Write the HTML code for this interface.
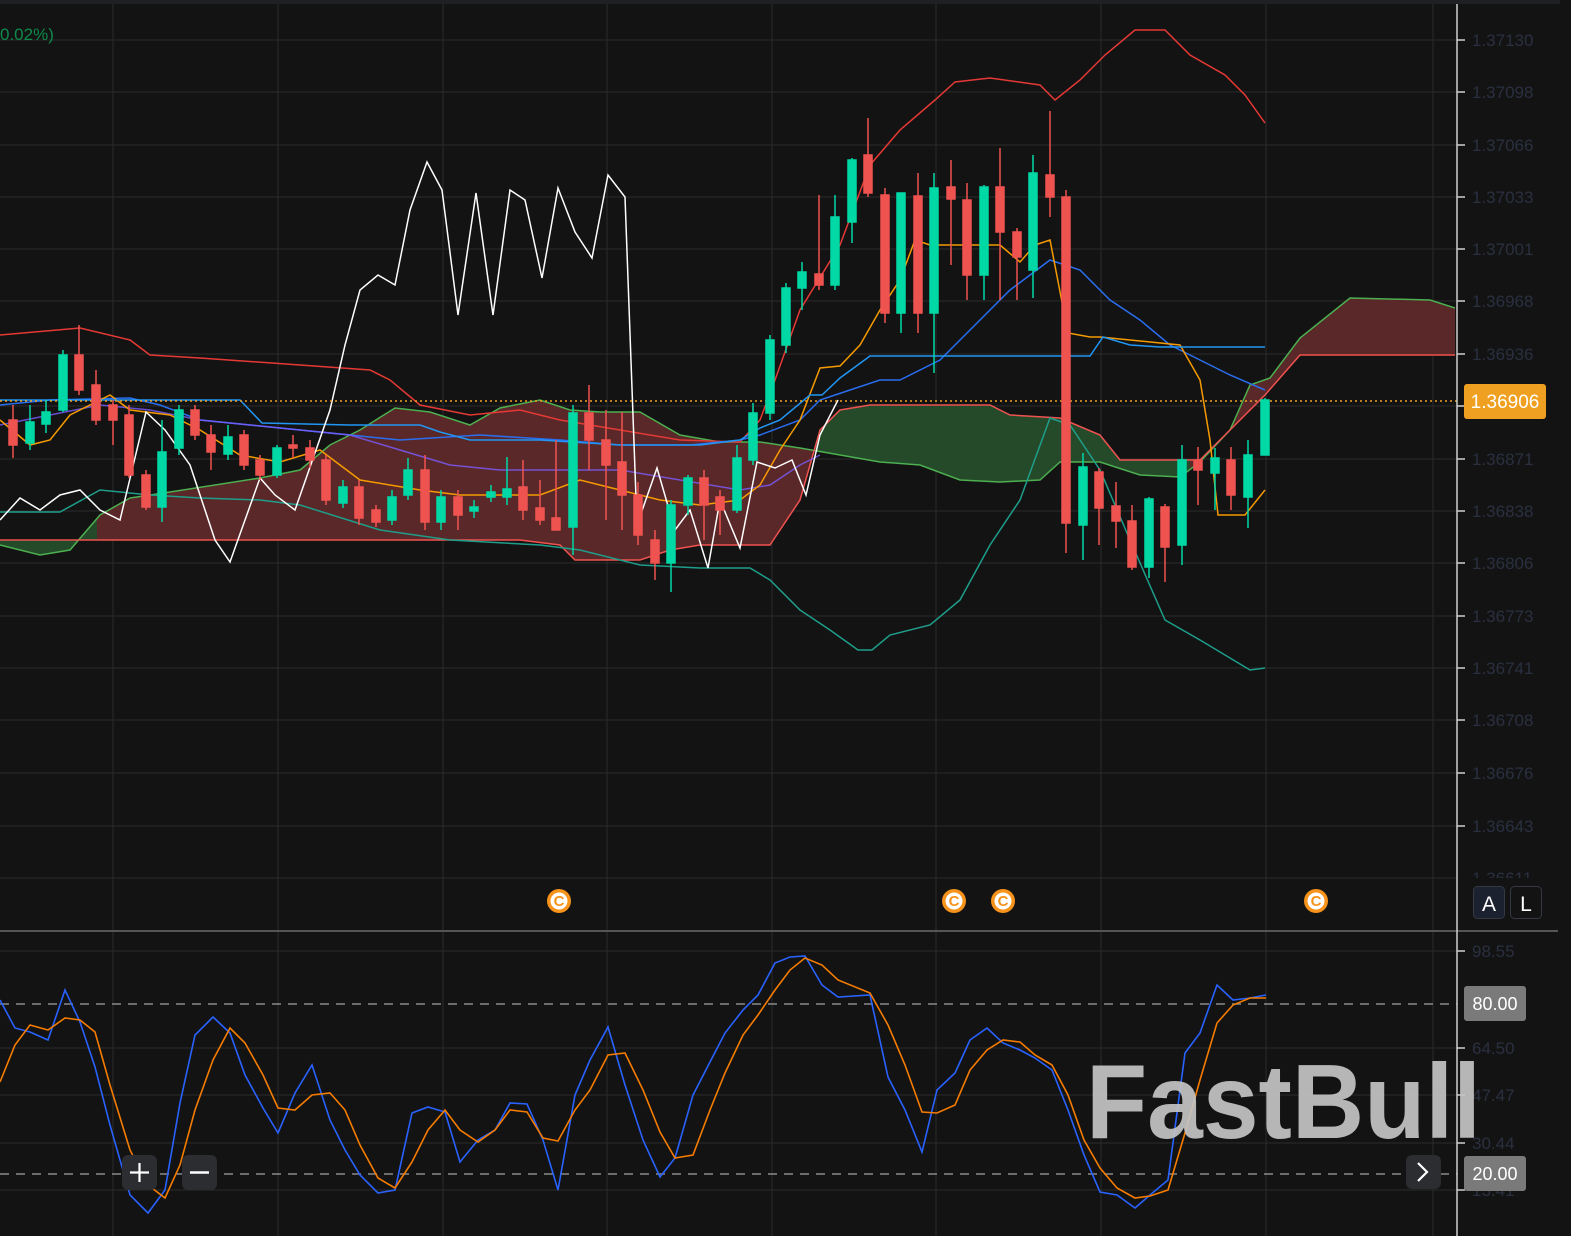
<!DOCTYPE html>
<html><head><meta charset="utf-8"><style>
html,body{margin:0;padding:0;background:#131313;}
svg{display:block}
text{font-family:"Liberation Sans",sans-serif}
</style></head><body>
<svg width="1571" height="1236" viewBox="0 0 1571 1236" xmlns="http://www.w3.org/2000/svg">
<defs>
<clipPath id="c1"><rect x="0" y="0" width="97" height="930"/></clipPath>
<clipPath id="c2"><rect x="97" y="0" width="718" height="930"/></clipPath>
<clipPath id="c3"><rect x="815" y="0" width="375" height="930"/></clipPath>
<clipPath id="c4"><rect x="1190" y="0" width="267" height="930"/></clipPath>
<clipPath id="main"><rect x="0" y="0" width="1457" height="930"/></clipPath>
<path id="cl" d="M0,545 L40,555 L70,550 L100,515 L130,498 L170,492 L260,478 L300,470 L330,445 L360,430 L395,408 L430,412 L470,425 L500,408 L540,400 L570,410 L600,412 L640,412 L680,435 L720,442 L760,442 L800,448 L840,455 L880,462 L920,465 L960,480 L1000,482 L1040,480 L1060,462 L1100,462 L1140,475 L1180,477 L1200,462 L1230,430 L1250,385 L1270,378 L1300,338 L1350,298 L1430,300 L1455,308 L1455,355 L1300,355 L1265,395 L1240,420 L1220,440 L1200,460 L1120,460 L1100,435 L1060,418 L1010,415 L990,405 L870,405 L840,410 L820,430 L800,500 L770,545 L700,545 L670,550 L640,560 L575,560 L560,545 L520,540 L400,540 L0,540 Z"/>
</defs>
<rect width="1571" height="1236" fill="#131313"/>
<rect width="1560" height="4" fill="#1f2024"/>
<g stroke="#2b2b2b" stroke-width="1">
<line x1="113" y1="4" x2="113" y2="1236"/><line x1="278" y1="4" x2="278" y2="1236"/><line x1="443" y1="4" x2="443" y2="1236"/><line x1="607" y1="4" x2="607" y2="1236"/><line x1="772" y1="4" x2="772" y2="1236"/><line x1="936" y1="4" x2="936" y2="1236"/><line x1="1101" y1="4" x2="1101" y2="1236"/><line x1="1266" y1="4" x2="1266" y2="1236"/><line x1="1433" y1="4" x2="1433" y2="1236"/>
<line x1="0" y1="40" x2="1457" y2="40"/><line x1="0" y1="92" x2="1457" y2="92"/><line x1="0" y1="145" x2="1457" y2="145"/><line x1="0" y1="197" x2="1457" y2="197"/><line x1="0" y1="249" x2="1457" y2="249"/><line x1="0" y1="301" x2="1457" y2="301"/><line x1="0" y1="354" x2="1457" y2="354"/><line x1="0" y1="406" x2="1457" y2="406"/><line x1="0" y1="459" x2="1457" y2="459"/><line x1="0" y1="511" x2="1457" y2="511"/><line x1="0" y1="563" x2="1457" y2="563"/><line x1="0" y1="616" x2="1457" y2="616"/><line x1="0" y1="668" x2="1457" y2="668"/><line x1="0" y1="720" x2="1457" y2="720"/><line x1="0" y1="773" x2="1457" y2="773"/><line x1="0" y1="826" x2="1457" y2="826"/><line x1="0" y1="878" x2="1457" y2="878"/>
<line x1="0" y1="951" x2="1457" y2="951"/><line x1="0" y1="1048" x2="1457" y2="1048"/><line x1="0" y1="1095" x2="1457" y2="1095"/><line x1="0" y1="1143" x2="1457" y2="1143"/><line x1="0" y1="1190" x2="1457" y2="1190"/>
</g>
<text x="0" y="40" font-size="17" fill="#0e8a4a">0.02%)</text>
<use href="#cl" fill="#254a2a" clip-path="url(#c1)"/>
<use href="#cl" fill="#5a2828" clip-path="url(#c2)"/>
<use href="#cl" fill="#254a2a" clip-path="url(#c3)"/>
<use href="#cl" fill="#5a2828" clip-path="url(#c4)"/>
<g fill="none" stroke-width="1.5" clip-path="url(#main)">
<polyline stroke="#4caf50" points="0,545 40,555 70,550 100,515 130,498 170,492 260,478 300,470 330,445 360,430 395,408 430,412 470,425 500,408 540,400 570,410 600,412 640,412 680,435 720,442 760,442 800,448 840,455 880,462 920,465 960,480 1000,482 1040,480 1060,462 1100,462 1140,475 1180,477 1200,462 1230,430 1250,385 1270,378 1300,338 1350,298 1430,300 1455,308"/>
<polyline stroke="#ef5350" points="0,540 400,540 520,540 560,545 575,560 640,560 670,550 700,545 770,545 800,500 820,430 840,410 870,405 990,405 1010,415 1060,418 1100,435 1120,460 1200,460 1220,440 1240,420 1265,395 1300,355 1455,355"/>
<polyline stroke="#e53935" points="0,335 80,328 130,340 150,355 200,358 300,365 370,370 390,380 420,405 470,415 520,410 560,420 620,430 680,440 740,442 760,420 775,380 800,310 840,245 870,165 900,130 935,100 955,82 990,78 1040,85 1055,100 1080,80 1105,55 1135,30 1165,30 1190,55 1225,75 1245,95 1265,123"/>
<polyline stroke="#2a6ef0" points="0,405 50,400 130,398 160,405 200,420 250,425 300,430 350,435 400,440 480,435 560,440 620,445 690,445 740,440 760,435 800,420 820,400 850,390 880,380 900,380 940,360 980,320 1010,290 1050,260 1080,270 1110,300 1140,320 1170,345 1200,360 1230,375 1265,390"/>
<polyline stroke="#1e9e8a" points="0,512 60,512 100,490 150,495 200,498 260,500 300,505 380,530 450,540 540,545 580,550 640,565 700,568 750,568 770,580 800,610 830,630 858,650 872,650 890,635 930,625 960,600 990,545 1020,500 1050,418 1070,425 1100,470 1130,540 1165,620 1200,640 1250,670 1265,668"/>
<polyline stroke="#7c5cff" stroke-opacity="0.8" points="0,425 50,415 100,405 150,410 200,420 250,425 300,430 350,435 400,450 450,465 500,470 560,470 620,470 680,480 740,490 770,485 800,465 820,455"/>
<polyline stroke="#f59a00" points="0,420 30,445 50,440 70,415 110,395 130,410 170,415 200,430 240,455 280,462 320,450 360,480 420,490 460,495 540,495 580,480 620,490 660,500 700,505 740,500 760,485 780,450 800,420 820,368 840,366 860,345 880,310 900,280 915,240 930,245 970,245 1000,245 1020,262 1035,245 1050,240 1068,333 1090,337 1100,337 1180,345 1200,380 1210,440 1218,515 1245,515 1265,490"/>
<polyline stroke="#2196f3" points="0,400 240,400 262,423 350,425 420,425 440,432 470,440 540,440 620,445 700,445 740,440 760,428 780,420 810,395 822,395 840,378 870,356 1090,356 1103,337 1130,345 1160,347 1265,347"/>
<polyline stroke="#ffffff" points="0,520 20,498 40,510 60,495 80,490 100,510 120,520 146,412 165,430 190,465 215,540 230,562 260,478 275,495 295,510 330,410 345,345 360,290 378,275 395,285 410,210 427,162 442,190 458,315 476,193 493,315 510,190 525,200 542,278 558,188 575,232 592,258 608,175 625,197 637,525 657,468 675,530 690,510 708,568 720,500 740,548 757,462 775,468 792,460 806,495 820,435 838,400"/>
</g>
<line x1="0" y1="401" x2="1457" y2="401" stroke="#f0a020" stroke-width="1.5" stroke-dasharray="2 3"/>
<g stroke-width="1.5">
<g stroke="#ef5350" fill="#ef5350">
<line x1="13" y1="405" x2="13" y2="458"/><rect x="9" y="420" width="8" height="25"/>
<line x1="79" y1="325" x2="79" y2="395"/><rect x="75" y="355" width="8" height="35"/>
<line x1="96" y1="370" x2="96" y2="425"/><rect x="92" y="385" width="8" height="35"/>
<line x1="113" y1="400" x2="113" y2="445"/><rect x="109" y="405" width="8" height="15"/>
<line x1="129" y1="405" x2="129" y2="478"/><rect x="125" y="415" width="8" height="60"/>
<line x1="146" y1="470" x2="146" y2="510"/><rect x="142" y="475" width="8" height="32"/>
<line x1="195" y1="405" x2="195" y2="440"/><rect x="191" y="410" width="8" height="25"/>
<line x1="211" y1="425" x2="211" y2="470"/><rect x="207" y="435" width="8" height="17"/>
<line x1="244" y1="430" x2="244" y2="470"/><rect x="240" y="435" width="8" height="30"/>
<line x1="260" y1="455" x2="260" y2="480"/><rect x="256" y="460" width="8" height="15"/>
<line x1="293" y1="435" x2="293" y2="458"/><rect x="289" y="445" width="8" height="3"/>
<line x1="310" y1="440" x2="310" y2="468"/><rect x="306" y="448" width="8" height="12"/>
<line x1="326" y1="455" x2="326" y2="505"/><rect x="322" y="460" width="8" height="40"/>
<line x1="359" y1="480" x2="359" y2="525"/><rect x="355" y="487" width="8" height="31"/>
<line x1="376" y1="505" x2="376" y2="527"/><rect x="372" y="510" width="8" height="12"/>
<line x1="425" y1="455" x2="425" y2="530"/><rect x="421" y="470" width="8" height="52"/>
<line x1="458" y1="490" x2="458" y2="530"/><rect x="454" y="497" width="8" height="18"/>
<line x1="523" y1="460" x2="523" y2="520"/><rect x="519" y="487" width="8" height="23"/>
<line x1="540" y1="480" x2="540" y2="525"/><rect x="536" y="508" width="8" height="12"/>
<line x1="556" y1="440" x2="556" y2="530"/><rect x="552" y="518" width="8" height="12"/>
<line x1="589" y1="385" x2="589" y2="470"/><rect x="585" y="413" width="8" height="27"/>
<line x1="606" y1="410" x2="606" y2="520"/><rect x="602" y="440" width="8" height="25"/>
<line x1="622" y1="412" x2="622" y2="530"/><rect x="618" y="462" width="8" height="33"/>
<line x1="638" y1="482" x2="638" y2="545"/><rect x="634" y="495" width="8" height="40"/>
<line x1="655" y1="530" x2="655" y2="580"/><rect x="651" y="540" width="8" height="23"/>
<line x1="704" y1="470" x2="704" y2="540"/><rect x="700" y="478" width="8" height="27"/>
<line x1="720" y1="490" x2="720" y2="535"/><rect x="716" y="497" width="8" height="13"/>
<line x1="819" y1="195" x2="819" y2="290"/><rect x="815" y="274" width="8" height="11"/>
<line x1="868" y1="118" x2="868" y2="197"/><rect x="864" y="155" width="8" height="38"/>
<line x1="885" y1="188" x2="885" y2="323"/><rect x="881" y="195" width="8" height="118"/>
<line x1="918" y1="173" x2="918" y2="333"/><rect x="914" y="196" width="8" height="117"/>
<line x1="951" y1="160" x2="951" y2="265"/><rect x="947" y="187" width="8" height="12"/>
<line x1="967" y1="183" x2="967" y2="300"/><rect x="963" y="200" width="8" height="75"/>
<line x1="1000" y1="148" x2="1000" y2="300"/><rect x="996" y="187" width="8" height="45"/>
<line x1="1017" y1="228" x2="1017" y2="300"/><rect x="1013" y="232" width="8" height="25"/>
<line x1="1050" y1="111" x2="1050" y2="217"/><rect x="1046" y="175" width="8" height="22"/>
<line x1="1066" y1="190" x2="1066" y2="553"/><rect x="1062" y="197" width="8" height="326"/>
<line x1="1099" y1="468" x2="1099" y2="545"/><rect x="1095" y="472" width="8" height="36"/>
<line x1="1116" y1="482" x2="1116" y2="548"/><rect x="1112" y="506" width="8" height="15"/>
<line x1="1132" y1="505" x2="1132" y2="570"/><rect x="1128" y="521" width="8" height="46"/>
<line x1="1165" y1="504" x2="1165" y2="582"/><rect x="1161" y="507" width="8" height="40"/>
<line x1="1198" y1="447" x2="1198" y2="505"/><rect x="1194" y="460" width="8" height="10"/>
<line x1="1231" y1="447" x2="1231" y2="510"/><rect x="1227" y="460" width="8" height="35"/>
</g>
<g stroke="#00d9a6" fill="#00d9a6">
<line x1="30" y1="405" x2="30" y2="450"/><rect x="26" y="422" width="8" height="21"/>
<line x1="46" y1="400" x2="46" y2="433"/><rect x="42" y="412" width="8" height="12"/>
<line x1="63" y1="350" x2="63" y2="412"/><rect x="59" y="355" width="8" height="55"/>
<line x1="162" y1="420" x2="162" y2="522"/><rect x="158" y="452" width="8" height="55"/>
<line x1="179" y1="405" x2="179" y2="455"/><rect x="175" y="410" width="8" height="38"/>
<line x1="228" y1="425" x2="228" y2="460"/><rect x="224" y="437" width="8" height="17"/>
<line x1="277" y1="445" x2="277" y2="478"/><rect x="273" y="448" width="8" height="27"/>
<line x1="343" y1="480" x2="343" y2="508"/><rect x="339" y="487" width="8" height="16"/>
<line x1="392" y1="490" x2="392" y2="525"/><rect x="388" y="497" width="8" height="23"/>
<line x1="408" y1="458" x2="408" y2="500"/><rect x="404" y="470" width="8" height="25"/>
<line x1="441" y1="490" x2="441" y2="530"/><rect x="437" y="497" width="8" height="25"/>
<line x1="474" y1="500" x2="474" y2="518"/><rect x="470" y="507" width="8" height="4"/>
<line x1="491" y1="485" x2="491" y2="502"/><rect x="487" y="492" width="8" height="5"/>
<line x1="507" y1="457" x2="507" y2="505"/><rect x="503" y="489" width="8" height="8"/>
<line x1="573" y1="405" x2="573" y2="555"/><rect x="569" y="413" width="8" height="114"/>
<line x1="671" y1="500" x2="671" y2="592"/><rect x="667" y="505" width="8" height="58"/>
<line x1="688" y1="475" x2="688" y2="515"/><rect x="684" y="478" width="8" height="27"/>
<line x1="737" y1="445" x2="737" y2="513"/><rect x="733" y="458" width="8" height="52"/>
<line x1="753" y1="403" x2="753" y2="465"/><rect x="749" y="413" width="8" height="47"/>
<line x1="770" y1="335" x2="770" y2="420"/><rect x="766" y="340" width="8" height="73"/>
<line x1="786" y1="283" x2="786" y2="353"/><rect x="782" y="288" width="8" height="57"/>
<line x1="802" y1="262" x2="802" y2="310"/><rect x="798" y="272" width="8" height="16"/>
<line x1="835" y1="195" x2="835" y2="290"/><rect x="831" y="217" width="8" height="68"/>
<line x1="852" y1="158" x2="852" y2="243"/><rect x="848" y="160" width="8" height="62"/>
<line x1="901" y1="193" x2="901" y2="333"/><rect x="897" y="193" width="8" height="120"/>
<line x1="934" y1="173" x2="934" y2="373"/><rect x="930" y="188" width="8" height="125"/>
<line x1="984" y1="185" x2="984" y2="300"/><rect x="980" y="187" width="8" height="88"/>
<line x1="1033" y1="155" x2="1033" y2="298"/><rect x="1029" y="173" width="8" height="97"/>
<line x1="1083" y1="453" x2="1083" y2="560"/><rect x="1079" y="467" width="8" height="58"/>
<line x1="1149" y1="497" x2="1149" y2="578"/><rect x="1145" y="499" width="8" height="68"/>
<line x1="1182" y1="445" x2="1182" y2="565"/><rect x="1178" y="460" width="8" height="85"/>
<line x1="1215" y1="448" x2="1215" y2="510"/><rect x="1211" y="458" width="8" height="15"/>
<line x1="1248" y1="440" x2="1248" y2="528"/><rect x="1244" y="455" width="8" height="42"/>
<line x1="1265" y1="398" x2="1265" y2="455"/><rect x="1261" y="400" width="8" height="55"/>
</g>
</g>
<g font-size="15" font-weight="bold" text-anchor="middle">
<g transform="translate(559,901)"><circle r="12" fill="#f7931a"/><circle r="8.5" fill="#fff"/><text y="5" fill="#f7931a">C</text></g>
<g transform="translate(954,901)"><circle r="12" fill="#f7931a"/><circle r="8.5" fill="#fff"/><text y="5" fill="#f7931a">C</text></g>
<g transform="translate(1003,901)"><circle r="12" fill="#f7931a"/><circle r="8.5" fill="#fff"/><text y="5" fill="#f7931a">C</text></g>
<g transform="translate(1316,901)"><circle r="12" fill="#f7931a"/><circle r="8.5" fill="#fff"/><text y="5" fill="#f7931a">C</text></g>
</g>
<line x1="0" y1="931" x2="1558" y2="931" stroke="#555" stroke-width="2"/>
<g stroke="#8a8a8a" stroke-width="1.5" stroke-dasharray="9 7">
<line x1="0" y1="1004" x2="1457" y2="1004"/><line x1="0" y1="1174" x2="1457" y2="1174"/>
</g>
<g fill="none" stroke-width="1.6">
<polyline stroke="#2962ff" points="0,1000 15,1028 30,1032 48,1040 65,990 80,1022 95,1067 110,1125 130,1195 148,1213 165,1190 180,1103 195,1035 213,1017 230,1033 245,1075 263,1108 278,1133 295,1093 312,1065 330,1120 345,1150 360,1175 378,1193 395,1190 412,1113 428,1107 445,1112 460,1162 478,1140 495,1130 510,1103 527,1104 543,1140 558,1190 575,1095 590,1060 608,1027 625,1085 643,1140 660,1177 675,1158 693,1095 710,1062 725,1033 743,1010 758,995 775,963 790,957 805,956 822,985 838,997 870,995 888,1077 905,1110 922,1152 937,1090 955,1073 970,1040 987,1028 1003,1043 1020,1050 1035,1058 1052,1070 1068,1110 1084,1155 1100,1192 1117,1195 1135,1208 1150,1195 1168,1180 1185,1053 1200,1033 1217,985 1233,1000 1250,998 1266,995"/>
<polyline stroke="#f57c00" points="0,1082 15,1045 30,1025 48,1030 65,1018 80,1020 95,1032 110,1085 130,1150 148,1185 165,1198 180,1165 195,1110 213,1060 230,1028 245,1043 263,1075 278,1108 295,1110 312,1095 330,1093 345,1110 360,1145 378,1178 395,1188 412,1162 428,1130 445,1110 460,1130 478,1142 495,1130 510,1110 527,1112 543,1138 558,1141 575,1110 590,1090 608,1055 625,1053 643,1090 660,1132 675,1158 693,1155 710,1110 725,1073 743,1035 758,1015 775,990 790,970 805,958 822,965 838,980 870,993 888,1025 905,1065 922,1112 937,1113 955,1105 970,1070 987,1050 1003,1040 1020,1042 1035,1055 1052,1065 1068,1095 1084,1140 1100,1168 1117,1188 1135,1198 1150,1196 1168,1190 1185,1133 1200,1080 1217,1023 1233,1005 1250,998 1266,998"/>
</g>
<rect x="122" y="1155" width="35" height="35" rx="6" fill="#2c2d31"/>
<path d="M130,1172.5 H149 M139.5,1163 V1182" stroke="#fff" stroke-width="2.2"/>
<rect x="182" y="1155" width="35" height="35" rx="6" fill="#2c2d31"/>
<path d="M190,1172.5 H209" stroke="#fff" stroke-width="2.4"/>
<rect x="1406" y="1155" width="35" height="34" rx="6" fill="#2c2d31"/>
<path d="M1418,1163 L1427,1172 L1418,1181" stroke="#fff" stroke-width="2.2" fill="none"/>
<rect x="1458" y="4" width="113" height="1232" fill="#131313"/>
<line x1="1457" y1="4" x2="1457" y2="1236" stroke="#cfcfcf" stroke-width="1.5"/>
<g stroke="#cfcfcf" stroke-width="1.5">
<line x1="1457" y1="40" x2="1465" y2="40"/><line x1="1457" y1="92" x2="1465" y2="92"/><line x1="1457" y1="145" x2="1465" y2="145"/><line x1="1457" y1="197" x2="1465" y2="197"/><line x1="1457" y1="249" x2="1465" y2="249"/><line x1="1457" y1="301" x2="1465" y2="301"/><line x1="1457" y1="354" x2="1465" y2="354"/><line x1="1457" y1="406" x2="1465" y2="406"/><line x1="1457" y1="459" x2="1465" y2="459"/><line x1="1457" y1="511" x2="1465" y2="511"/><line x1="1457" y1="563" x2="1465" y2="563"/><line x1="1457" y1="616" x2="1465" y2="616"/><line x1="1457" y1="668" x2="1465" y2="668"/><line x1="1457" y1="720" x2="1465" y2="720"/><line x1="1457" y1="773" x2="1465" y2="773"/><line x1="1457" y1="826" x2="1465" y2="826"/>
<line x1="1457" y1="951" x2="1465" y2="951"/><line x1="1457" y1="1048" x2="1465" y2="1048"/><line x1="1457" y1="1095" x2="1465" y2="1095"/><line x1="1457" y1="1143" x2="1465" y2="1143"/><line x1="1457" y1="1190" x2="1465" y2="1190"/>
</g>
<line x1="1458" y1="931" x2="1558" y2="931" stroke="#555" stroke-width="2"/>
<g font-size="17" fill="#2a3040">
<text x="1472" y="46">1.37130</text><text x="1472" y="98">1.37098</text><text x="1472" y="151">1.37066</text><text x="1472" y="203">1.37033</text><text x="1472" y="255">1.37001</text><text x="1472" y="307">1.36968</text><text x="1472" y="360">1.36936</text><text x="1472" y="465">1.36871</text><text x="1472" y="517">1.36838</text><text x="1472" y="569">1.36806</text><text x="1472" y="622">1.36773</text><text x="1472" y="674">1.36741</text><text x="1472" y="726">1.36708</text><text x="1472" y="779">1.36676</text><text x="1472" y="832">1.36643</text>
<text x="1472" y="957">98.55</text><text x="1472" y="1054">64.50</text><text x="1472" y="1101">47.47</text><text x="1472" y="1149">30.44</text><text x="1472" y="1196">13.41</text>
<text x="1472" y="884">1.36611</text>
</g>
<rect x="1458" y="878" width="100" height="50" fill="#131313"/>
<rect x="1464" y="384" width="82" height="35" rx="3" fill="#f0a020"/>
<text x="1505" y="408" font-size="19" fill="#fff" text-anchor="middle">1.36906</text>
<rect x="1464" y="986" width="62" height="35" rx="3" fill="#7a7a7a"/>
<text x="1495" y="1010" font-size="18" fill="#fff" text-anchor="middle">80.00</text>
<rect x="1464" y="1156" width="62" height="35" rx="3" fill="#7a7a7a"/>
<text x="1495" y="1180" font-size="18" fill="#fff" text-anchor="middle">20.00</text>
<rect x="1473.5" y="886.5" width="31" height="32" rx="4" fill="#1c2130" stroke="#333844"/>
<text x="1489" y="911" font-size="21" fill="#fff" text-anchor="middle">A</text>
<rect x="1510.5" y="886.5" width="31" height="32" rx="4" fill="#131313" stroke="#333844"/>
<text x="1526" y="911" font-size="21" fill="#fff" text-anchor="middle">L</text>
<text x="1086" y="1138" font-size="106" font-weight="bold" fill="#c4c4c4" fill-opacity="0.92" textLength="395" lengthAdjust="spacingAndGlyphs">FastBull</text>
</svg>
</body></html>
